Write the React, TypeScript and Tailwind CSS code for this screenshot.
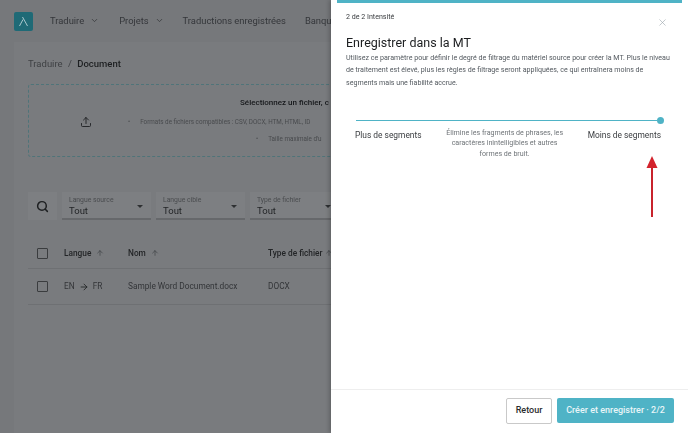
import React from "react";
import { ChevronDown, Upload, Search, ArrowUp, ArrowRight, X } from "lucide-react";

function Filter({ label }: { label: string }) {
  return (
    <div className="w-[89px] h-[28px] mr-[5px] shrink-0 bg-[#7d7f82] border-b-2 border-[#66686b] pl-[7px] pr-[8px] pt-[4px] flex justify-between">
      <div className="flex flex-col">
        <span className="text-[6.8px] leading-[9px] text-[#4a4c4f] whitespace-nowrap">{label}</span>
        <span className="text-[9.5px] leading-[11px] text-[#232527]">Tout</span>
      </div>
      <div className="mt-[9px] w-0 h-0 border-x-[3px] border-x-transparent border-t-[3px] border-t-[#2e3032]" />
    </div>
  );
}

function Check() {
  return <div className="w-[11px] h-[11px] border-[1.5px] border-[#3a3c3e] rounded-[1px] shrink-0" />;
}

export default function App() {
  return (
    <div className="relative w-[688px] h-[433px] overflow-hidden bg-[#76787b] font-['Roboto',sans-serif]">
      <div className="w-[688px] h-[433px] overflow-hidden blur-[0.3px]">
        <header className="h-[42px] flex items-center pl-[14px] text-[9.4px] text-[#34363a]">
          <div className="w-[19px] h-[19px] rounded-[2px] bg-[#1f6a76] flex items-center justify-center shrink-0">
            <svg width="11" height="11" viewBox="0 0 11 11" fill="none" stroke="#b9d2d6" strokeWidth="0.9">
              <path d="M1.5 10 L5 3.5 M4.5 1 L9.5 10" />
            </svg>
          </div>
          <div className="ml-[17px] flex items-center whitespace-nowrap">
            <span>Traduire</span>
            <ChevronDown size={9} strokeWidth={2} className="ml-[6px]" />
            <span className="ml-[20px]">Projets</span>
            <ChevronDown size={9} strokeWidth={2} className="ml-[6px]" />
            <span className="ml-[19px]">Traductions enregistrées</span>
            <span className="ml-[19px]">Banque</span>
          </div>
        </header>
        <main className="ml-[14px] h-[391px] bg-[#797b7e] pl-[14px] pt-[15px]">
          <div className="text-[9.5px] leading-[14px] h-[14px] text-[#3f4144] whitespace-nowrap">
            Traduire <span className="mx-[3px]">/</span> <span className="text-[#1e2022] font-medium">Document</span>
          </div>
          <div className="mt-[13px] w-[640px] h-[73px] border border-dashed border-[#4f7479] rounded-[3px] flex items-center whitespace-nowrap">
            <Upload size={12} strokeWidth={1.8} className="ml-[51px] mt-[3px] shrink-0 text-[#1e2022]" />
            <div className="ml-[36px] shrink-0 text-[6.3px] text-[#484a4d]">
              <div className="pl-[112px] pb-[10px] text-[8px] leading-[10px] font-medium text-[#15171a]">Sélectionnez un fichier, c</div>
              <div className="pb-[8px] leading-[9px]">•<span className="ml-[10px]">Formats de fichiers compatibles : CSV, DOCX, HTM, HTML, ID</span></div>
              <div className="pl-[128px] leading-[9px]">•<span className="ml-[10px]">Taille maximale d'u</span></div>
            </div>
          </div>
          <section className="mt-[35px] flex items-center">
            <div className="w-[29px] h-[28px] mr-[5px] shrink-0 bg-[#7d7f82] flex items-center justify-center">
              <Search size={13} strokeWidth={2.75} className="text-[#1e2022]" />
            </div>
            <Filter label="Langue source" />
            <Filter label="Langue cible" />
            <Filter label="Type de fichier" />
          </section>
          <div className="mt-[18px] w-[640px] h-[31px] flex items-center border-b border-[#6e7073] whitespace-nowrap text-[8.3px] font-medium text-[#232527]">
            <div className="ml-[9px] w-[27px]"><Check /></div>
            <div className="w-[64px] flex items-center">Langue<ArrowUp size={8} className="ml-[5px] text-[#3d3f42]" /></div>
            <div className="w-[140px] flex items-center">Nom<ArrowUp size={8} className="ml-[5px] text-[#3d3f42]" /></div>
            <div className="flex items-center">Type de fichier<ArrowUp size={8} className="ml-[3px] text-[#3d3f42]" /></div>
          </div>
          <div className="w-[640px] h-[36px] flex items-center border-b border-[#6e7073] whitespace-nowrap text-[8.3px] text-[#333538]">
            <div className="ml-[9px] w-[27px]"><Check /></div>
            <div className="w-[64px] flex items-center">EN<ArrowRight size={10} strokeWidth={2} className="mx-[4px] text-[#1e2022]" />FR</div>
            <div className="w-[140px]">Sample Word Document.docx</div>
            <div>DOCX</div>
          </div>
        </main>
      </div>

      <aside className="absolute right-0 top-0 w-[357px] h-[433px] bg-white shadow-[-2px_0_4px_rgba(0,0,0,0.2)] flex flex-col blur-[0.2px]">
        <div className="h-[3px] ml-[6px] mr-[6px] bg-[#4fb3c6] shrink-0" />
        <div className="relative flex-1 pl-[15px] pr-[13px]">
          <div className="pt-[9px] text-[7.1px] leading-[10px] text-[#3a3d40]">2 de 2 Intensité</div>
          <X size={11} strokeWidth={1.3} className="absolute right-[20px] top-[14px] text-[#9aa3aa]" />
          <h2 className="mt-[13px] text-[12.5px] leading-[16px] text-[#1c1e20] whitespace-nowrap">Enregistrer dans la MT</h2>
          <p className="mt-[1px] w-[329px] text-[7.1px] leading-[12.3px] text-[#53595f]">
            Utilisez ce paramètre pour définir le degré de filtrage du matériel source pour créer la MT. Plus le niveau de traitement est élevé, plus les règles de filtrage seront appliquées, ce qui entraînera moins de segments mais une fiabilité accrue.
          </p>
          <div className="mt-[28px] ml-[10px] w-[308px] h-[7px] flex items-center">
            <div className="flex-1 h-[1.5px] bg-[#4fb3c6]" />
            <div className="w-[7px] h-[7px] rounded-full bg-[#4fb3c6]" />
          </div>
          <div className="ml-[9px] w-[306px] mt-[3px] flex justify-between items-start whitespace-nowrap">
            <span className="pt-[1px] text-[8.4px] leading-[14px] text-[#3a3d40]">Plus de segments</span>
            <div className="pt-[1px] text-[7.1px] leading-[10.5px] text-[#6f7478] text-center">
              Élimine les fragments de phrases, les<br />caractères inintelligibles et autres<br />formes de bruit.
            </div>
            <span className="pt-[1px] text-[8.4px] leading-[14px] text-[#3a3d40]">Moins de segments</span>
          </div>
          <svg className="absolute left-[314px] top-[152px]" width="14" height="66" viewBox="0 0 14 66">
            <path d="M7 12 L7 62" stroke="#c8232c" strokeWidth="2" />
            <path d="M1.5 13 L7 1 L12.5 13 Z" fill="#d3232c" />
          </svg>
        </div>
        <footer className="h-[44px] border-t border-[#eeeeee] flex justify-end items-start pt-[8px] pr-[14px] gap-[5px]">
          <button className="w-[46px] h-[26px] bg-white border border-[#c9c9c9] rounded-[2px] text-[9px] font-medium text-[#2a2c2e]">Retour</button>
          <button className="w-[117px] h-[25px] bg-[#4fb3c6] rounded-[2px] text-[9px] font-medium text-[#e8f5f8]">Créer et enregistrer · 2/2</button>
        </footer>
      </aside>
    </div>
  );
}
